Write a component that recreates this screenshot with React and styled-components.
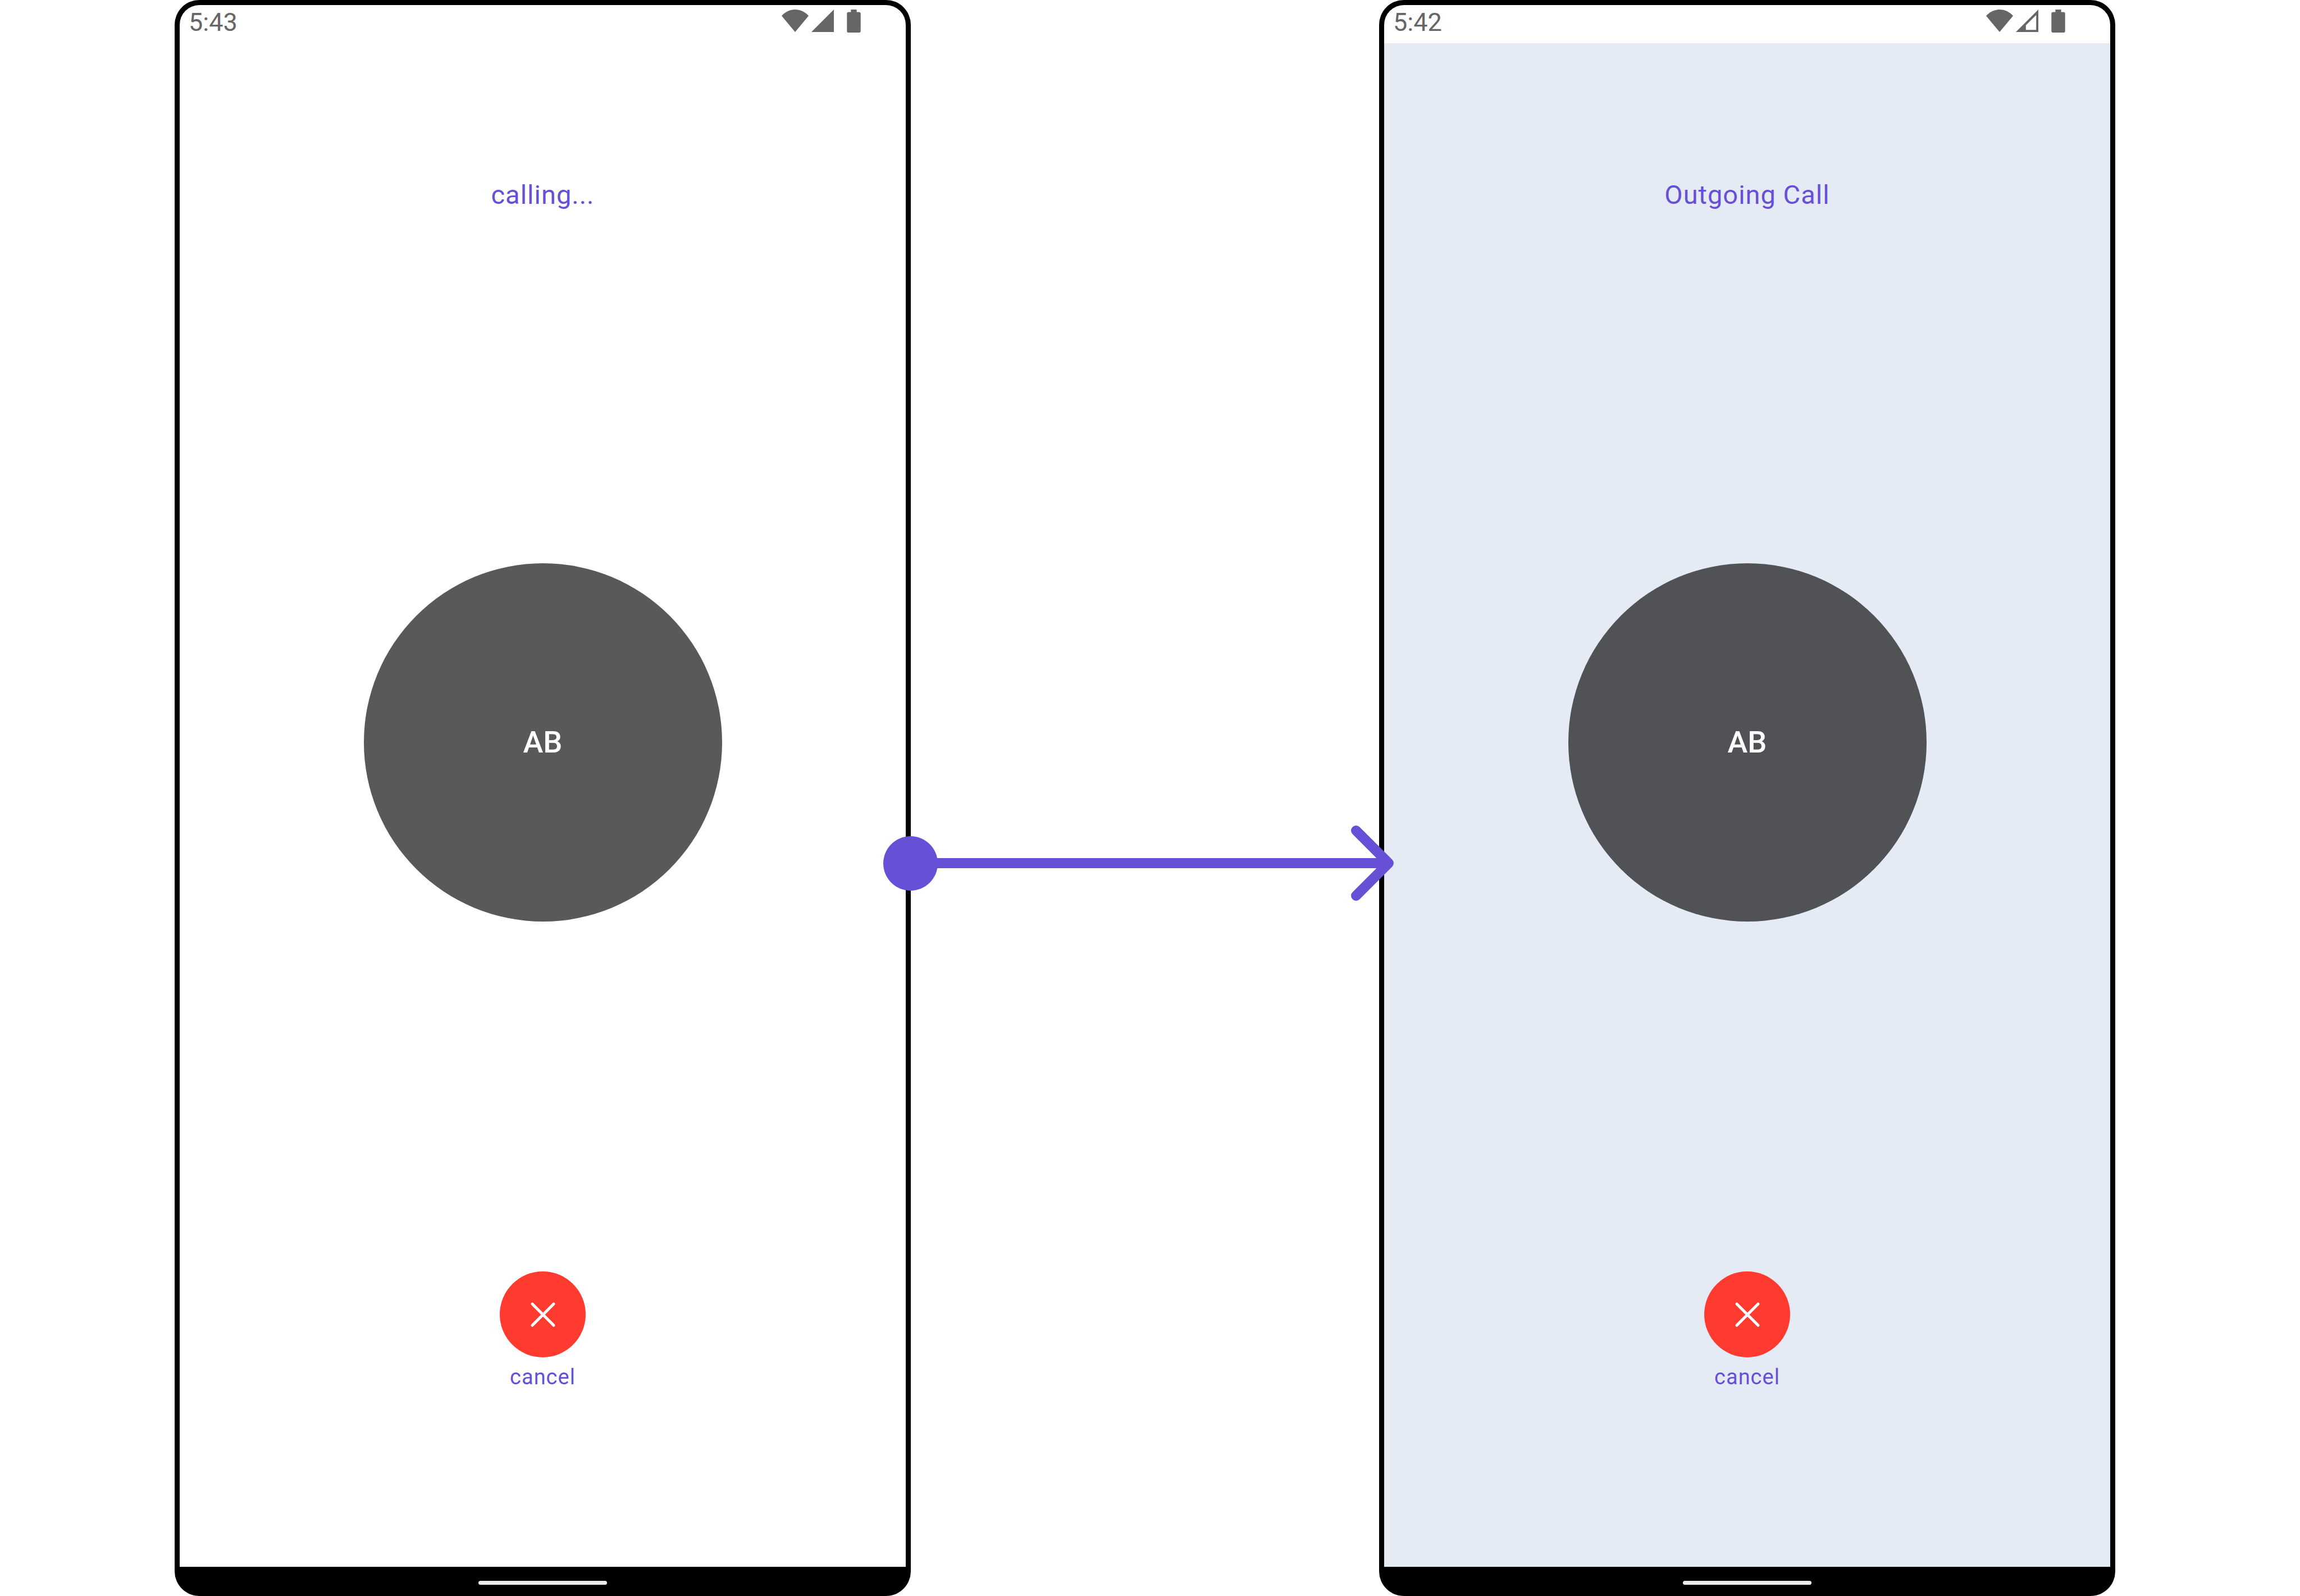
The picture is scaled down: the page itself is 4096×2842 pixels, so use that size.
import React from "react";
import styled, { createGlobalStyle } from "styled-components";

const GlobalStyle = createGlobalStyle`
  *, *::before, *::after { box-sizing: border-box; }
  body {
    margin: 0;
    background: #ffffff;
    font-family: Roboto, "Liberation Sans", sans-serif;
  }
`;

const accent = "#6750d6";

const Board = styled.main`
  display: grid;
  grid-template-columns: 311fr 1311fr 834fr 1311fr 329fr;
  min-height: 100vh;
`;

const Phone = styled.section`
  grid-column: ${(p) => p.$column};
  grid-row: 1;
  display: flex;
  flex-direction: column;
  border: 9px solid #000000;
  border-bottom: 0;
  border-radius: 44px;
  background: #000000;
`;

const StatusBar = styled.header`
  display: flex;
  align-items: flex-start;
  justify-content: space-between;
  height: 68px;
  padding: 0 80px 0 16px;
  border-radius: 35px 35px 0 0;
  background: #ffffff;
  color: #666666;
`;

const Time = styled.time`
  font-size: 45px;
  line-height: 62px;
`;

const StatusIcons = styled.div`
  display: flex;
  align-items: flex-start;
  gap: 5px;
  padding-top: 8px;

  svg {
    display: block;
    fill: currentColor;
  }

  svg:last-child {
    margin-left: 18px;
  }
`;

const Screen = styled.div`
  flex: 1;
  display: flex;
  flex-direction: column;
  align-items: center;
  justify-content: space-between;
  padding: 238px 0 315px;
  background: ${(p) => p.$background};
  color: ${accent};
`;

const Title = styled.h1`
  margin: 0;
  font-size: 47px;
  font-weight: 400;
  line-height: 64px;
  letter-spacing: 1px;
`;

const Avatar = styled.div`
  display: flex;
  align-items: center;
  justify-content: center;
  width: 638px;
  height: 638px;
  border-radius: 50%;
  background: ${(p) => p.$background};
  color: #ffffff;
  font-size: 54px;
  font-weight: 500;
  line-height: 64px;
`;

const Action = styled.div`
  display: flex;
  flex-direction: column;
  align-items: center;
  gap: 12px;
`;

const RoundButton = styled.button`
  display: flex;
  align-items: center;
  justify-content: center;
  width: 153px;
  height: 153px;
  padding: 0;
  border: 0;
  border-radius: 50%;
  background: #ff3b30;
  color: #ffffff;
  cursor: pointer;
`;

const ActionLabel = styled.label`
  font-size: 38px;
  line-height: 46px;
  letter-spacing: 1px;
`;

const NavigationBar = styled.footer`
  display: flex;
  align-items: center;
  justify-content: center;
  height: 52px;
  padding-top: 4px;
`;

const HomeHandle = styled.div`
  width: 229px;
  height: 7px;
  border-radius: 4px;
  background: #ebe9ea;
`;

const Connector = styled.div`
  position: relative;
  z-index: 1;
  grid-column: 3;
  grid-row: 1;
  display: flex;
  align-items: center;
  align-self: start;
  margin: 1470px -26px 0 -49px;
  color: ${accent};

  svg {
    display: block;
    margin-left: -18px;
  }
`;

const Dot = styled.div`
  width: 97px;
  height: 97px;
  border-radius: 50%;
  background: currentColor;
`;

const Line = styled.div`
  flex: 1;
  height: 18px;
  margin-left: -2px;
  background: currentColor;
`;

function WifiIcon() {
  return (
    <svg width="48" height="40" viewBox="0 0 48 40" aria-hidden="true">
      <path d="M0 11.2C6 4.4 14.6 0 24 0s18 4.4 24 11.2L24 40Z" />
    </svg>
  );
}

function SignalIcon({ weak }) {
  return (
    <svg width="40" height="40" viewBox="0 0 40 40" aria-hidden="true">
      <path
        fillRule="evenodd"
        d={weak ? "M0 40 40 0V40ZM17.8 28V36.2H36.2V9.8Z" : "M0 40 40 0V40Z"}
      />
    </svg>
  );
}

function BatteryIcon() {
  return (
    <svg width="25" height="41" viewBox="0 0 25 41" aria-hidden="true">
      <path d="M7.4 0h10.2v4.4h4.3A2.8 2.8 0 0 1 24.7 7.2v31A2.8 2.8 0 0 1 21.9 41H3.1A2.8 2.8 0 0 1 .3 38.2V7.2A2.8 2.8 0 0 1 3.1 4.4h4.3Z" />
    </svg>
  );
}

function CloseIcon() {
  return (
    <svg
      width="46"
      height="46"
      viewBox="0 0 46 46"
      fill="none"
      stroke="currentColor"
      strokeWidth="5"
      strokeLinecap="round"
      aria-hidden="true"
    >
      <path d="M4 4 42 42M42 4 4 42" />
    </svg>
  );
}

function CallPhone({ id, column, time, title, background, avatar, weakSignal }) {
  return (
    <Phone $column={column}>
      <StatusBar>
        <Time>{time}</Time>
        <StatusIcons>
          <WifiIcon />
          <SignalIcon weak={weakSignal} />
          <BatteryIcon />
        </StatusIcons>
      </StatusBar>
      <Screen $background={background}>
        <Title>{title}</Title>
        <Avatar $background={avatar}>AB</Avatar>
        <Action>
          <RoundButton id={id} type="button">
            <CloseIcon />
          </RoundButton>
          <ActionLabel htmlFor={id}>cancel</ActionLabel>
        </Action>
      </Screen>
      <NavigationBar>
        <HomeHandle />
      </NavigationBar>
    </Phone>
  );
}

export default function App() {
  return (
    <>
      <GlobalStyle />
      <Board>
        <CallPhone
          id="cancel-calling"
          column={2}
          time="5:43"
          title="calling..."
          background="#ffffff"
          avatar="#595959"
        />
        <Connector>
          <Dot />
          <Line />
          <svg
            width="76"
            height="134"
            viewBox="0 0 76 134"
            fill="none"
            stroke="currentColor"
            strokeWidth="18"
            strokeLinecap="round"
            strokeLinejoin="round"
            aria-hidden="true"
          >
            <path d="M0 67H67M9 9 67 67 9 125" />
          </svg>
        </Connector>
        <CallPhone
          id="cancel-outgoing"
          column={4}
          time="5:42"
          title="Outgoing Call"
          background="#e4ebf5"
          avatar="#515255"
          weakSignal
        />
      </Board>
    </>
  );
}
